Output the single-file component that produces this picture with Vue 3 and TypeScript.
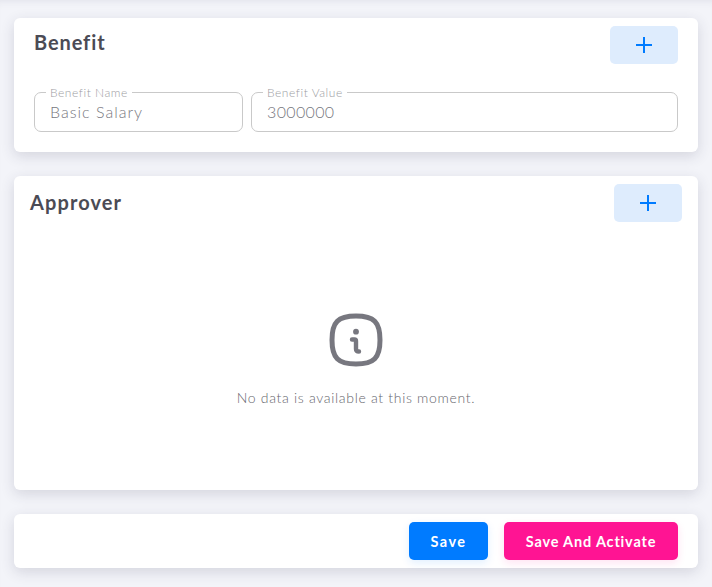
<script setup lang="ts">
const fields = [
  { label: 'Benefit Name', value: 'Basic Salary', cls: 'name' },
  { label: 'Benefit Value', value: '3000000', cls: 'val' },
]
</script>

<template>
  <main class="page">
    <section class="card benefit">
      <header class="head">
        <h2 class="title">Benefit</h2>
        <button class="add" aria-label="Add benefit">
          <svg width="16" height="16" viewBox="0 0 16 16"><path d="M8 0v16M0 8h16" stroke="#007bff" stroke-width="2" fill="none" /></svg>
        </button>
      </header>
      <div class="fields">
        <div v-for="f in fields" :key="f.label" class="field" :class="f.cls">
          <span class="legend">{{ f.label }}</span>
          <span class="value">{{ f.value }}</span>
        </div>
      </div>
    </section>

    <section class="card approver">
      <header class="head">
        <h2 class="title">Approver</h2>
        <button class="add" aria-label="Add approver">
          <svg width="16" height="16" viewBox="0 0 16 16"><path d="M8 0v16M0 8h16" stroke="#007bff" stroke-width="2" fill="none" /></svg>
        </button>
      </header>
      <div class="empty">
        <svg width="56" height="56" viewBox="0 0 56 56" fill="none" stroke="#77777f" stroke-linecap="round" stroke-linejoin="round">
          <path d="M28 4C46 4 52 10 52 28S46 52 28 52 4 46 4 28 10 4 28 4Z" stroke-width="5" />
          <path d="M24 27.5h2.5q1.5 0 1.5 1.5v8q0 2.5 3 2.5" stroke-width="4.4" />
          <circle cx="28" cy="19.7" r="2.9" fill="#77777f" stroke="none" />
        </svg>
        <p class="msg">No data is available at this moment.</p>
      </div>
    </section>

    <section class="card actions">
      <button class="btn save">Save</button>
      <button class="btn activate">Save And Activate</button>
    </section>
  </main>
</template>

<style>
html, body { margin: 0; background: #f3f4f9; }
</style>

<style scoped>
.page {
  box-sizing: border-box;
  width: 712px;
  height: 587px;
  padding: 18px 14px 0;
  display: flex;
  flex-direction: column;
  gap: 24px;
  background: #f3f4f9;
  box-shadow: inset 0 7px 8px -7px rgba(60, 60, 90, 0.12);
  overflow: hidden;
  font-family: Lato, "Noto Sans", sans-serif;
}
.card {
  box-sizing: border-box;
  background: #fff;
  border-radius: 6px;
  box-shadow: 0 4px 14px rgba(50, 50, 80, 0.16);
}
.benefit { height: 134px; padding: 8px 20px; }
.approver { height: 314px; padding: 8px 16px; }
.head {
  display: flex;
  justify-content: space-between;
  align-items: flex-start;
}
.title {
  margin: 0;
  font-size: 20px;
  line-height: 32px;
  font-weight: 700;
  color: #4b4b55;
  letter-spacing: 0.9px;
}
.approver .title { line-height: 37px; letter-spacing: 1.1px; }
.add {
  width: 68px;
  height: 38px;
  border: 0;
  border-radius: 5px;
  padding: 0;
  background: #deecfd;
  display: flex;
  align-items: center;
  justify-content: center;
}
.add svg { display: block; }
.fields {
  display: flex;
  gap: 8px;
  margin-top: 28px;
}
.field {
  position: relative;
  box-sizing: border-box;
  height: 40px;
  border: 1px solid #c9c9c9;
  border-radius: 7px;
  padding: 0 15px;
  display: flex;
  align-items: center;
}
.field.name { width: 209px; flex: none; }
.field.val { flex: 1; }
.legend {
  position: absolute;
  top: -7px;
  left: 11px;
  padding: 0 4px;
  background: #fff;
  font-size: 12px;
  line-height: 14px;
  font-weight: 300;
  color: #9c9ca2;
  letter-spacing: 0.55px;
}
.value {
  font-size: 16px;
  font-weight: 300;
  color: #77777e;
  letter-spacing: 1px;
  margin-top: -1px;
}
.val .value { letter-spacing: 0.35px; }
.empty {
  height: 268px;
  display: flex;
  flex-direction: column;
  align-items: center;
  padding-top: 90px;
  box-sizing: border-box;
}
.empty svg { display: block; }
.msg {
  margin: 21px 0 0;
  font-size: 14px;
  line-height: 18px;
  font-weight: 300;
  color: #66666d;
  letter-spacing: 0.68px;
}
.actions {
  height: 54px;
  padding: 8px 20px;
  display: flex;
  justify-content: flex-end;
  gap: 16px;
}
.btn {
  height: 38px;
  border: 0;
  border-radius: 5px;
  color: #fff;
  font-family: inherit;
  font-size: 14.5px;
  font-weight: 700;
  letter-spacing: 0.82px;
  padding: 0;
}
.save { width: 79px; background: #007bff; letter-spacing: 1.4px; box-shadow: 0 3px 8px rgba(0, 123, 255, 0.12); }
.activate { width: 174px; background: #ff1493; box-shadow: 0 3px 8px rgba(255, 20, 147, 0.12); }
</style>
